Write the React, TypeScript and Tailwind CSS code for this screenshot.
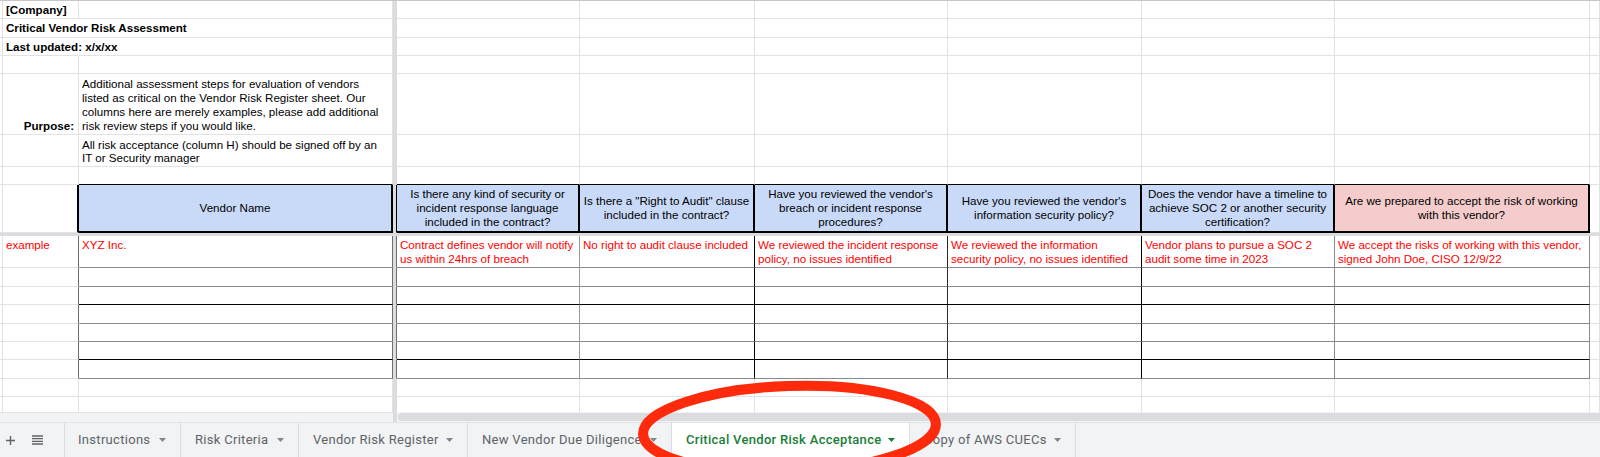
import React from 'react';

// Column widths, each including the cell's right border
const COLW = [
  'w-[3px]',
  'w-[76px]',
  'w-[314px]',
  'w-[4px]',
  'w-[183px]',
  'w-[175px]',
  'w-[193px]',
  'w-[194px]',
  'w-[193px]',
  'w-[255px]',
  'flex-1',
];

type CellSpec = { r?: string; b?: string; cls?: string; content?: React.ReactNode };

const DIV: CellSpec = { r: 'border-r-[#dadce0]', b: 'border-b-[#dadce0]', cls: 'bg-[#dadce0]' };

function Row({ h, cells }: { h: string; cells: CellSpec[] }) {
  return (
    <div className={`flex ${h}`}>
      {cells.map((c, i) => (
        <div
          key={i}
          className={`${COLW[i]} shrink-0 min-w-0 flex border-r border-b ${c.r ?? 'border-r-[#e2e2e2]'} ${
            c.b ?? 'border-b-[#e2e2e2]'
          } ${c.cls ?? ''}`}
        >
          {c.content}
        </div>
      ))}
    </div>
  );
}

function blank(over: Record<number, CellSpec> = {}): CellSpec[] {
  return Array.from({ length: 11 }, (_, i) => over[i] ?? (i === 3 ? DIV : {}));
}

function Lines({ lines, center }: { lines: string[]; center?: boolean }) {
  return (
    <div className={`leading-[14px] ${center ? 'text-center' : ''}`}>
      {lines.map((l) => (
        <div key={l} className="whitespace-nowrap">
          {l}
        </div>
      ))}
    </div>
  );
}

const HEAD_BLUE = 'bg-[#c9daf8] items-center justify-center border-r-2 border-b-2';
const HEAD_PINK = 'bg-[#f4cccc] items-center justify-center border-r-2 border-b-2';

function header(): CellSpec[] {
  const hb = { r: 'border-r-black', b: 'border-b-black' };
  return blank({
    1: { r: 'border-r-black', cls: 'border-r-2' },
    2: { ...hb, cls: HEAD_BLUE, content: <Lines center lines={['Vendor Name']} /> },
    3: { r: 'border-r-black', b: 'border-b-[#dadce0]', cls: 'bg-[#dadce0]' },
    4: {
      ...hb,
      cls: HEAD_BLUE,
      content: (
        <Lines
          center
          lines={['Is there any kind of security or', 'incident response language', 'included in the contract?']}
        />
      ),
    },
    5: {
      ...hb,
      cls: HEAD_BLUE,
      content: <Lines center lines={['Is there a "Right to Audit" clause', 'included in the contract?']} />,
    },
    6: {
      ...hb,
      cls: HEAD_BLUE,
      content: (
        <Lines center lines={["Have you reviewed the vendor's", 'breach or incident response', 'procedures?']} />
      ),
    },
    7: {
      ...hb,
      cls: HEAD_BLUE,
      content: <Lines center lines={["Have you reviewed the vendor's", 'information security policy?']} />,
    },
    8: {
      ...hb,
      cls: HEAD_BLUE,
      content: (
        <Lines
          center
          lines={['Does the vendor have a timeline to', 'achieve SOC 2 or another security', 'certification?']}
        />
      ),
    },
    9: {
      ...hb,
      cls: HEAD_PINK,
      content: <Lines center lines={['Are we prepared to accept the risk of working', 'with this vendor?']} />,
    },
  });
}

// Vertical border colours of the bordered table body, per column
const BODY_R: Record<number, string> = {
  1: 'border-r-[#6f6f6f]',
  2: 'border-r-[#6f6f6f]',
  3: 'border-r-[#6f6f6f]',
  4: 'border-r-[#9a9a9a]',
  5: 'border-r-black',
  6: 'border-r-[#2a2a2a]',
  7: 'border-r-black',
  8: 'border-r-[#8a8a8a]',
  9: 'border-r-[#8a8a8a]',
};

function bodyRow(bottom: string, content: Record<number, React.ReactNode> = {}): CellSpec[] {
  const over: Record<number, CellSpec> = {};
  for (let i = 1; i <= 9; i++) {
    if (i === 3) {
      over[i] = { r: BODY_R[3], b: 'border-b-[#dadce0]', cls: 'bg-[#dadce0]' };
    } else if (i === 1) {
      over[i] = { r: BODY_R[1], cls: 'items-start pt-[2px] pl-[3px] text-[#ff0000]', content: content[i] };
    } else {
      over[i] = { r: BODY_R[i], b: bottom, cls: 'items-start pt-[2px] pl-[3px] text-[#ff0000]', content: content[i] };
    }
  }
  return blank(over);
}

const GRAY_B = 'border-b-[#8a8a8a]';
const BLACK_B = 'border-b-black';

function Sheet() {
  const topHeader: Record<number, CellSpec> = {};
  for (const i of [2, 4, 5, 6, 7, 8, 9]) topHeader[i] = { b: 'border-b-black' };

  return (
    <div className="h-[412px] overflow-hidden border-t border-t-[#c7c7c7]">
      <Row
        h="h-[18px]"
        cells={blank({
          1: { cls: 'items-end pl-[3px] pb-[1px] font-bold', content: <span className="whitespace-nowrap leading-[14px]">[Company]</span> },
        })}
      />
      <Row
        h="h-[19px]"
        cells={blank({
          1: {
            r: 'border-r-transparent',
            cls: 'items-end pl-[3px] pb-[2px] font-bold',
            content: <span className="whitespace-nowrap leading-[14px]">Critical Vendor Risk Assessment</span>,
          },
        })}
      />
      <Row
        h="h-[18px]"
        cells={blank({
          1: {
            r: 'border-r-transparent',
            cls: 'items-end pl-[3px] pb-[1px] font-bold',
            content: <span className="whitespace-nowrap leading-[14px]">Last updated: x/x/xx</span>,
          },
        })}
      />
      <Row h="h-[18px]" cells={blank()} />
      <Row
        h="h-[61px]"
        cells={blank({
          1: {
            cls: 'items-end justify-end pr-[4px] pb-[1px] font-bold',
            content: <span className="whitespace-nowrap leading-[14px]">Purpose:</span>,
          },
          2: {
            cls: 'items-end pl-[3px] pb-[1px]',
            content: (
              <Lines
                lines={[
                  'Additional assessment steps for evaluation of vendors',
                  'listed as critical on the Vendor Risk Register sheet. Our',
                  'columns here are merely examples, please add additional',
                  'risk review steps if you would like.',
                ]}
              />
            ),
          },
        })}
      />
      <Row
        h="h-[32px]"
        cells={blank({
          2: {
            cls: 'items-end pl-[3px] pb-[2px]',
            content: (
              <div className="leading-[13px]">
                <div className="whitespace-nowrap">All risk acceptance (column H) should be signed off by an</div>
                <div className="whitespace-nowrap">IT or Security manager</div>
              </div>
            ),
          },
        })}
      />
      <Row h="h-[18px]" cells={blank(topHeader)} />
      <Row h="h-[48px]" cells={header()} />
      {/* frozen-row divider */}
      <div className="h-[3px] bg-[#dadce0]" />
      <Row
        h="h-[32px]"
        cells={bodyRow(GRAY_B, {
          1: <span className="whitespace-nowrap leading-[14px]">example</span>,
          2: <span className="whitespace-nowrap leading-[14px]">XYZ Inc.</span>,
          4: <Lines lines={['Contract defines vendor will notify', 'us within 24hrs of breach']} />,
          5: <Lines lines={['No right to audit clause included']} />,
          6: <Lines lines={['We reviewed the incident response', 'policy, no issues identified']} />,
          7: <Lines lines={['We reviewed the information', 'security policy, no issues identified']} />,
          8: <Lines lines={['Vendor plans to pursue a SOC 2', 'audit some time in 2023']} />,
          9: <Lines lines={['We accept the risks of working with this vendor,', 'signed John Doe, CISO 12/9/22']} />,
        })}
      />
      <Row h="h-[19px]" cells={bodyRow(GRAY_B)} />
      <Row h="h-[18px]" cells={bodyRow(BLACK_B)} />
      <Row h="h-[19px]" cells={bodyRow(GRAY_B)} />
      <Row h="h-[18px]" cells={bodyRow(GRAY_B)} />
      <Row h="h-[18px]" cells={bodyRow(BLACK_B)} />
      <Row h="h-[19px]" cells={bodyRow(GRAY_B)} />
      <Row h="h-[18px]" cells={blank()} />
      <Row h="h-[18px]" cells={blank()} />
    </div>
  );
}

function ScrollBand() {
  return (
    <div className="flex h-[10px] bg-[#f1f3f4]">
      <div className="w-[393px] shrink-0 bg-[#f1f3f4] border-t border-t-[#e2e2e2]" />
      <div className="w-[4px] shrink-0 bg-[#dadce0]" />
      <div className="flex-1 flex items-center pl-[1px]">
        <div className="h-[8px] w-full rounded-l-full bg-[#dadce0]" />
      </div>
    </div>
  );
}

function Caret({ active }: { active?: boolean }) {
  return (
    <svg width="7" height="4" viewBox="0 0 7 4" className="shrink-0">
      <path d="M0 0h7L3.5 4z" fill={active ? '#188038' : '#80868b'} />
    </svg>
  );
}

const TABS = [
  { name: 'Instructions', w: 'w-[116px]', pl: 'pl-[13px]' },
  { name: 'Risk Criteria', w: 'w-[118px]', pl: 'pl-[14px]' },
  { name: 'Vendor Risk Register', w: 'w-[169px]', pl: 'pl-[14px]' },
  { name: 'New Vendor Due Diligence', w: 'w-[204px]', pl: 'pl-[14px]' },
  { name: 'Critical Vendor Risk Acceptance', w: 'w-[238px]', pl: 'pl-[14px]', active: true },
  { name: 'Copy of AWS CUECs', w: 'w-[166px]', pl: 'pl-[14px]' },
];

function TabBar() {
  return (
    <div className="flex h-[35px] bg-[#f1f3f4] border-t border-t-[#e3e3e3] font-['Roboto','Liberation_Sans',sans-serif] text-[13px] font-normal tracking-[0.3px] text-[#5f6368]">
      <div className="w-[65px] shrink-0 flex items-center border-r border-r-[#dadce0]">
        <svg width="9" height="9" viewBox="0 0 9 9" className="ml-[6px]">
          <path d="M4.5 0v9M0 4.5h9" stroke="#5f6368" strokeWidth="1.4" />
        </svg>
        <svg width="11" height="10" viewBox="0 0 11 10" className="ml-[17px]">
          <path d="M0 1h11M0 3.7h11M0 6.3h11M0 9h11" stroke="#5f6368" strokeWidth="1.3" />
        </svg>
      </div>
      {TABS.map((t) => (
        <div
          key={t.name}
          className={`${t.w} ${t.pl} shrink-0 flex items-center justify-between pr-[14px] border-r border-r-[#dadce0] ${
            t.active ? 'bg-white text-[#188038] font-medium' : ''
          }`}
        >
          <span className="whitespace-nowrap">{t.name}</span>
          <Caret active={t.active} />
        </div>
      ))}
    </div>
  );
}

export default function App() {
  return (
    <div className="relative w-[1600px] h-[457px] overflow-hidden bg-white text-black font-['Liberation_Sans',Arial,sans-serif] text-[11.6px]">
      <Sheet />
      <ScrollBand />
      <TabBar />
      {/* hand-drawn highlight around the active tab */}
      <svg className="pointer-events-none absolute left-0 top-0" width="1600" height="457" viewBox="0 0 1600 457">
        <ellipse
          cx="789.5"
          cy="429"
          rx="146.5"
          ry="43"
          fill="none"
          stroke="#fe2a0c"
          strokeWidth="10"
          transform="rotate(-2 789.5 429)"
        />
      </svg>
    </div>
  );
}
